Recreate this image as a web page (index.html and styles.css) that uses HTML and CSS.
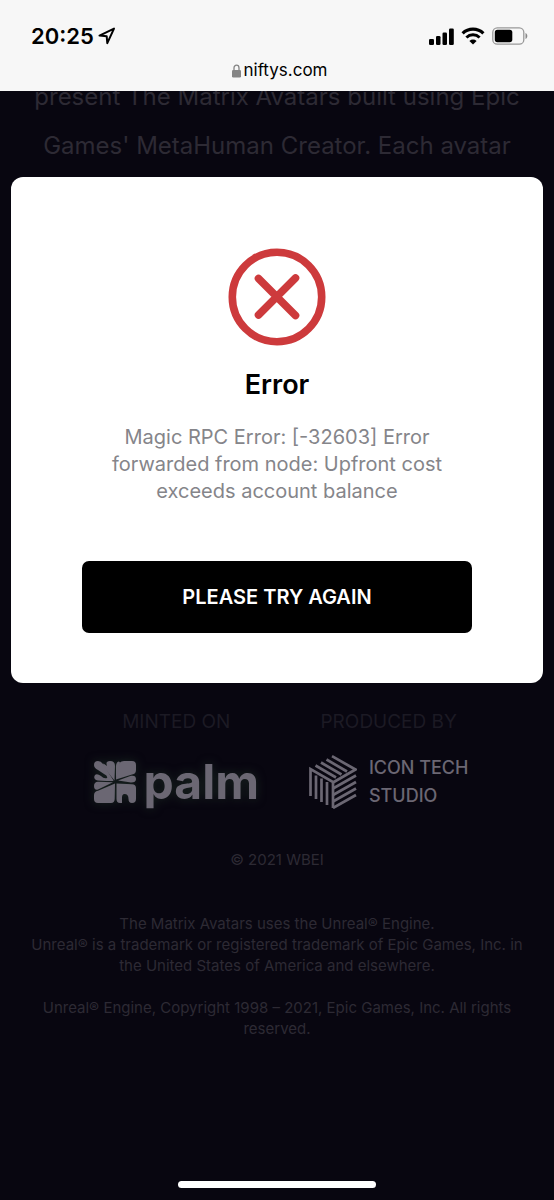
FILE: index.html
```html
<!DOCTYPE html>
<html lang="en">
<head>
<meta charset="utf-8">
<meta name="viewport" content="width=device-width, initial-scale=1">
<title>niftys.com</title>
<link rel="stylesheet" href="styles.css">
</head>
<body>
<header class="chrome">
  <div class="status">
    <div class="status-side status-time">
      <span class="clock">20:25</span>
      <svg width="18" height="18" viewBox="0 0 18 18" aria-hidden="true"><path d="M1.500 8.600 16 1.600 9.300 16.200 8.700 9.300Z" fill="none" stroke="#000" stroke-width="2" stroke-linejoin="round"/></svg>
    </div>
    <div class="status-side">
      <svg width="25" height="17" viewBox="0 0 25 17" aria-hidden="true"><rect x="0" y="11" width="5" height="6" rx="1.3"/><rect x="7" y="8" width="4.500" height="9" rx="1.3"/><rect x="13.500" y="4.500" width="4.500" height="12.500" rx="1.3"/><rect x="20" y="0.500" width="4.800" height="16.500" rx="1.3"/></svg>
      <svg width="24" height="18" viewBox="0 0 24 18" aria-hidden="true"><path d="M1.600 6.400A15 15 0 0 1 22.400 6.400" fill="none" stroke="#000" stroke-width="3.200"/><path d="M5.400 10.500A9.500 9.500 0 0 1 18.600 10.500" fill="none" stroke="#000" stroke-width="3"/><path d="M12 17.500 8.400 13.900A5.200 5.200 0 0 1 15.600 13.900Z"/></svg>
      <svg width="36" height="18" viewBox="0 0 36 18" aria-hidden="true"><rect x="0.800" y="0.800" width="31" height="16.400" rx="4.500" fill="none" stroke="#999" stroke-width="1.300"/><rect x="2.800" y="2.800" width="17.500" height="12.400" rx="2.600"/><path d="M33.500 6v6c2.400-1 2.400-5 0-6Z" fill="#888"/></svg>
    </div>
  </div>
  <div class="address">
    <svg width="9" height="14" viewBox="0 0 9 14" aria-hidden="true"><path d="M2 7V4a2.500 2.800 0 0 1 5 0v3" fill="none" stroke="#858585" stroke-width="1.300"/><rect x="0" y="6" width="9" height="7.500" rx="1.300" fill="#858585"/></svg>
    <span>niftys.com</span>
  </div>
</header>
<main class="page">
  <p class="intro">present The Matrix Avatars built using Epic Games' MetaHuman Creator. Each avatar</p>
  <section class="partners">
    <div class="partner">
      <h2 class="partner-label">MINTED ON</h2>
      <div class="partner-logo palm">
        <svg width="42" height="42" viewBox="0 0 42 42" aria-hidden="true">
          <g fill="#6b6773">
            <path d="M20.500 19.500 11.500 8.500Q8 5 9.500 2.500L13 5Q11 0 16 0Q21 0 21 5Z"/>
            <path d="M19.500 19.500 9 3Q7 0 4 0Q0 0 0 4Q0 7 4 9L10 13Q14 15 13 17Q10 18 7 15Q3 12 1 14Q-1 17 2 19Q4 20 19 20Z"/>
            <path d="M22 18.500 22.500 6 26 1.500Q27 0 30 0H38Q42 0 42 4V9Q42 13 38 13.500Z"/>
            <path d="M22 18.500 26 1.500Q25 0 23.500 1Q21.500 3 22 8Z"/>
            <path d="M24 19.500 37 14.800Q42 14 42 18Q42 21.500 37 21.500Z"/>
            <path d="M19 21.300 4 20.800Q0 21 0 25Q0 29.500 4 28.500Z"/>
            <path d="M21 22.500 20.700 38Q20.500 42 17 42H4Q0 42 0 38V34Q0 30.500 4 29.800Z"/>
            <path d="M22.500 22.500 38 23.200Q42 23.500 42 27V38Q42 42 38 42Q34.500 42 34.500 38Q34.500 33 30.500 33Q28 33 28 36.500V42H26Q22.500 42 22.500 38Z"/>
          </g>
        </svg>
        <span class="palm-name">palm</span>
      </div>
    </div>
    <div class="partner">
      <h2 class="partner-label">PRODUCED BY</h2>
      <div class="partner-logo studio">
        <svg width="48" height="54" viewBox="0 0 48 54" aria-hidden="true"><g fill="none" stroke="#6b6773" stroke-width="2.700"><path d="M1.500 41V14L24 27V53M7 44V20.500M12.500 47V23.500M18 50V27"/><path d="M6.500 10.500 27 22.500M12 7.500 32.500 19.500M17.500 4.500 38 16.500M23 1.200 46.500 14.500 24 27.500"/><path d="M24 33.500 47 20.500M24 40 47 27M24 46.500 47 33.500M24 53 47 40"/></g></svg>
        <span class="studio-name">ICON TECH<br>STUDIO</span>
      </div>
    </div>
  </section>
  <footer class="legal">
    <p class="copyright">© 2021 WBEI</p>
    <p>The Matrix Avatars uses the Unreal® Engine.<br>Unreal® is a trademark or registered trademark of Epic Games, Inc. in the United States of America and elsewhere.</p>
    <p>Unreal® Engine, Copyright 1998 – 2021, Epic Games, Inc. All rights reserved.</p>
  </footer>
  <div class="home-indicator"></div>
  <section class="dialog" role="alertdialog" aria-labelledby="dialog-title" aria-describedby="dialog-text">
    <svg class="dialog-icon" width="98" height="98" viewBox="0 0 98 98" aria-hidden="true"><g fill="none" stroke="#cd3a3c"><circle cx="49" cy="49" r="44.700" stroke-width="7.600"/><path d="M30.500 30.500 67.500 67.500M67.500 30 30.500 67" stroke-width="7.600" stroke-linecap="round"/></g></svg>
    <h1 class="dialog-title" id="dialog-title">Error</h1>
    <p class="dialog-text" id="dialog-text">Magic RPC Error: [-32603] Error forwarded from node: Upfront cost exceeds account balance</p>
    <button class="retry" type="button">PLEASE TRY AGAIN</button>
  </section>
</main>
</body>
</html>
```
FILE: styles.css
```css
* {
  box-sizing: border-box;
}

body {
  margin: 0;
  min-height: 100vh;
  display: flex;
  flex-direction: column;
  background: #080610;
  font-family: Inter, "Liberation Sans", sans-serif;
}

h1, h2, p {
  margin: 0;
}

.chrome {
  padding: 22px 26px 10px 31px;
  background: #f7f7f7;
  color: #000;
}

.status {
  display: flex;
  justify-content: space-between;
  height: 28px;
}

.status-side {
  display: flex;
  align-items: center;
  gap: 7px;
}

.status-time {
  gap: 4px;
}

.clock {
  font-size: 22px;
  line-height: 28px;
  font-weight: 600;
}

.address {
  display: flex;
  justify-content: center;
  align-items: center;
  gap: 3px;
  margin-top: 10px;
  font-size: 17px;
  line-height: 21px;
}

.page {
  flex: 1;
  position: relative;
  display: flex;
  flex-direction: column;
  overflow: hidden;
  text-align: center;
}

.intro {
  margin-top: -19px;
  padding: 0 32px;
  color: #2d2a34;
  font-size: 24px;
  line-height: 49px;
}

.partners {
  display: flex;
  justify-content: center;
  gap: 50px;
  margin-top: 538px;
  padding-left: 8px;
}

.partner {
  display: flex;
  flex-direction: column;
  align-items: center;
  gap: 16px;
}

.partner-label {
  color: #1c1a24;
  font-size: 19px;
  line-height: 28px;
  font-weight: 400;
}

.partner-logo {
  display: flex;
  align-items: center;
  height: 60px;
  color: #6b6773;
}

.palm {
  gap: 8px;
  filter: drop-shadow(0 0 5px #18241f);
}

.palm-name {
  font-size: 48px;
  line-height: 60px;
  font-weight: 700;
}

.studio {
  gap: 12px;
  text-align: left;
}

.studio-name {
  font-size: 18px;
  line-height: 28px;
  font-weight: 500;
}

.legal {
  display: flex;
  flex-direction: column;
  gap: 21px;
  margin-top: 37px;
  padding: 0 28px;
  color: #2d2a34;
  font-size: 15px;
  line-height: 21px;
}

.copyright {
  margin-bottom: 22px;
}

.home-indicator {
  width: 198px;
  height: 7px;
  margin: auto auto 12px;
  border-radius: 4px;
  background: #fff;
}

.dialog {
  position: absolute;
  top: 86px;
  left: 11px;
  right: 11px;
  padding: 71px 71px 50px;
  border-radius: 12px;
  background: #fff;
}

.dialog-icon {
  display: block;
  margin: 0 auto;
}

.dialog-title {
  margin-top: 23px;
  color: #000;
  font-size: 27px;
  line-height: 32px;
  font-weight: 600;
}

.dialog-text {
  margin-top: 23px;
  color: #85858a;
  font-size: 20px;
  line-height: 27px;
}

.retry {
  width: 100%;
  margin-top: 56px;
  padding: 22px;
  border: 0;
  border-radius: 7px;
  background: #000;
  color: #fff;
  font-family: inherit;
  font-size: 20px;
  line-height: 28px;
  font-weight: 600;
}
```
